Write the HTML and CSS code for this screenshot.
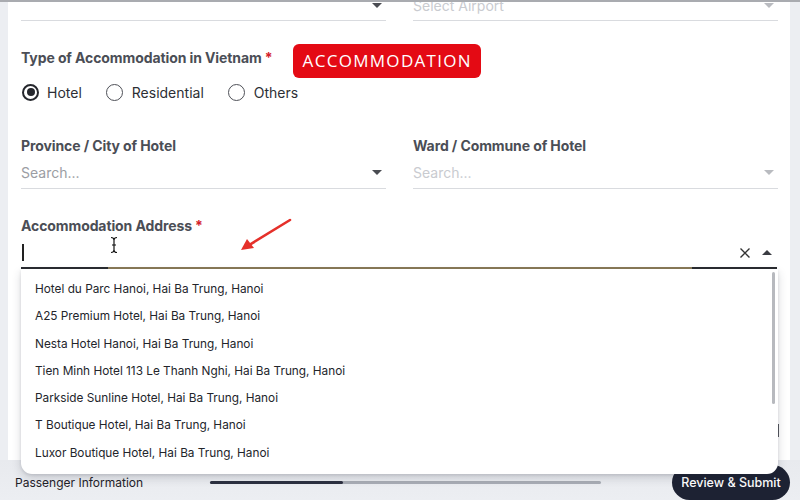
FILE: index.html
```html
<!DOCTYPE html>
<html>
<head>
<meta charset="utf-8">
<link rel="stylesheet" href="styles.css">
</head>
<body>
<div class="topline"></div>
<main class="card">
  <div class="row row-top">
    <div class="field field-top">
      <span class="placeholder"></span>
      <span class="caret-down"></span>
    </div>
    <div class="field field-top">
      <span class="placeholder faded">Select Airport</span>
      <span class="caret-down faded-caret"></span>
    </div>
  </div>

  <section class="accom">
    <div class="label-row">
      <span class="label">Type of Accommodation in Vietnam <span class="req">*</span></span>
      <span class="badge">ACCOMMODATION</span>
    </div>
    <div class="radios">
      <label class="radio"><span class="dot checked"></span>Hotel</label>
      <label class="radio"><span class="dot"></span>Residential</label>
      <label class="radio"><span class="dot"></span>Others</label>
    </div>
  </section>

  <div class="row row-loc">
    <div class="col">
      <div class="label">Province / City of Hotel</div>
      <div class="field">
        <span class="placeholder">Search...</span>
        <span class="caret-down"></span>
      </div>
    </div>
    <div class="col">
      <div class="label">Ward / Commune of Hotel</div>
      <div class="field">
        <span class="placeholder faded">Search...</span>
        <span class="caret-down faded-caret"></span>
      </div>
    </div>
  </div>

  <section class="address">
    <div class="label">Accommodation Address <span class="req">*</span></div>
    <div class="field field-focus">
      <span class="text-caret"></span>
      <span class="icons">
        <svg class="x-icon" width="12" height="12" viewBox="0 0 12 12"><path d="M1.5 1.5 L10.5 10.5 M10.5 1.5 L1.5 10.5" stroke="#333" stroke-width="1.4" fill="none"/></svg>
        <span class="caret-up"></span>
      </span>
    </div>
    <svg class="ibeam" width="10" height="18" viewBox="0 0 10 18"><path d="M2 1.5 Q5 1.5 5 4 Q5 1.5 8 1.5 M5 4 V14 M2 16.5 Q5 16.5 5 14 Q5 16.5 8 16.5 M3 9 H7" stroke="#111" stroke-width="1.2" fill="none"/></svg>
    <svg class="red-arrow" width="56" height="36" viewBox="0 0 56 36"><path d="M52 3 L8 30" stroke="#e5302a" stroke-width="2.6" stroke-linecap="round"/><path d="M3 33 L9 22 L16 31 Z" fill="#e5302a"/></svg>

    <ul class="menu">
      <li>Hotel du Parc Hanoi, Hai Ba Trung, Hanoi</li>
      <li>A25 Premium Hotel, Hai Ba Trung, Hanoi</li>
      <li>Nesta Hotel Hanoi, Hai Ba Trung, Hanoi</li>
      <li>Tien Minh Hotel 113 Le Thanh Nghi, Hai Ba Trung, Hanoi</li>
      <li>Parkside Sunline Hotel, Hai Ba Trung, Hanoi</li>
      <li>T Boutique Hotel, Hai Ba Trung, Hanoi</li>
      <li>Luxor Boutique Hotel, Hai Ba Trung, Hanoi</li>
      <span class="scroll-thumb"></span>
    </ul>
  </section>
  <span class="behind-tick"></span>
</main>
<footer class="footer">
  <span class="step">Passenger Information</span>
  <div class="progress"><span class="progress-fill"></span></div>
  <button class="submit">Review &amp; Submit</button>
</footer>
</body>
</html>
```
FILE: styles.css
```css
* { box-sizing: border-box; }
html, body { margin: 0; padding: 0; }
body {
  width: 800px;
  height: 500px;
  overflow: hidden;
  background: #eceef2;
  font-family: Inter, "Liberation Sans", sans-serif;
  display: flex;
  flex-direction: column;
  position: relative;
}
.topline {
  position: absolute;
  top: 0; left: 0; right: 0;
  height: 2px;
  background: #a9abb0;
  z-index: 5;
}
.card {
  background: #fff;
  margin: 0 10px 0 8px;
  padding: 0 13px 0 13px;
  height: 462px;
  position: relative;
}
.row {
  display: grid;
  grid-template-columns: 365px 365px;
  column-gap: 27px;
}
.field {
  display: flex;
  align-items: center;
  justify-content: space-between;
  border-bottom: 1px solid #d9dbdf;
  height: 32px;
  position: relative;
}
.field-top {
  height: 21px;
  align-items: flex-start;
}
.field-top .placeholder { margin-top: -3px; }
.field-top .caret-down { margin-top: 3px; }
.placeholder {
  font-size: 14px;
  color: #9b9da3;
  line-height: 18px;
}
.placeholder.faded { color: #c9cbd0; }
.caret-down {
  width: 0; height: 0;
  border-left: 5px solid transparent;
  border-right: 5px solid transparent;
  border-top: 5px solid #4a4c52;
  margin-right: 4px;
}
.caret-down.faded-caret { border-top-color: #b9bbc0; }
.caret-up {
  width: 0; height: 0;
  border-left: 5px solid transparent;
  border-right: 5px solid transparent;
  border-bottom: 5px solid #3a3c42;
  margin-right: 5px;
}
.label {
  font-weight: 700;
  font-size: 14px;
  color: #4b4e56;
  line-height: 18px;
  letter-spacing: -0.1px;
}
.req { color: #d3202a; }
.accom { margin-top: 23px; }
.label-row {
  display: flex;
  align-items: flex-start;
  gap: 20px;
}
.label-row .label { margin-top: 5px; }
.badge {
  background: #e40a14;
  color: #fff;
  font-family: "Open Sans", "Liberation Sans", sans-serif;
  font-size: 17px;
  font-weight: 500;
  letter-spacing: 1.3px;
  border-radius: 6px;
  height: 34px;
  line-height: 34px;
  padding: 0 9px 0 10px;
}
.radios {
  display: flex;
  align-items: center;
  margin-top: 2px;
  height: 24px;
}
.radio {
  display: flex;
  align-items: center;
  font-size: 14px;
  color: #2d2f35;
  margin-right: 24px;
}
.dot {
  width: 17px; height: 17px;
  border-radius: 50%;
  border: 1.6px solid #4e5057;
  margin: 0 9px 0 0;
  position: relative;
  display: inline-block;
}
.dot.checked { border: 2px solid #25272d; }
.dot.checked::after {
  content: "";
  position: absolute;
  left: 2.5px; top: 2.5px;
  width: 8px; height: 8px;
  border-radius: 50%;
  background: #25272d;
}
.radio:first-child .dot { margin-left: 1px; margin-right: 8px; }
.row-loc { margin-top: 33px; }
.col .field { margin-top: 2px; }
.address { margin-top: 28px; position: relative; }
.field-focus {
  border-bottom: none;
  height: 33px;
  margin-top: 1px;
  background:
    linear-gradient(to right, #2a2c31 0, #2a2c31 87px, #8a7b58 87px, #8a7b58 671px, #2a2c31 671px) bottom / 100% 2px no-repeat;
}
.text-caret {
  width: 1.6px;
  height: 17px;
  background: #222;
  margin-left: 1px;
  margin-top: 0;
}
.icons {
  display: flex;
  align-items: center;
  gap: 11px;
  margin-top: 0;
}
.ibeam {
  position: absolute;
  left: 88px;
  top: 19px;
}
.red-arrow {
  position: absolute;
  left: 217px;
  top: 0;
}
.menu {
  position: absolute;
  left: 0;
  top: 52px;
  width: 757px;
  height: 205px;
  margin: 0;
  padding: 7px 0 0 0;
  list-style: none;
  background: #fff;
  border-radius: 0 0 11px 11px;
  box-shadow: 0 4px 10px rgba(40, 45, 60, 0.18), 0 1px 3px rgba(40, 45, 60, 0.12);
  z-index: 10;
}
.menu li {
  font-size: 11.8px;
  color: #23252b;
  height: 27.3px;
  line-height: 27.3px;
  padding-left: 14px;
}
.scroll-thumb {
  position: absolute;
  right: 3px;
  top: 3px;
  width: 3px;
  height: 132px;
  border-radius: 2px;
  background: #b7b9be;
}
.behind-tick {
  position: absolute;
  right: 11px;
  top: 424px;
  width: 2px;
  height: 13px;
  background: #55575d;
}
.footer {
  flex: 1;
  display: flex;
  align-items: center;
  padding: 4px 10px 0 15px;
  background: linear-gradient(#e8eaee, #eceef2);
  position: relative;
}
.step {
  font-size: 12px;
  color: #1f2128;
  width: 195px;
}
.progress {
  width: 391px;
  height: 3px;
  background: #a9adb5;
  border-radius: 2px;
}
.progress-fill {
  display: block;
  width: 133px;
  height: 3px;
  background: #2c3040;
  border-radius: 2px;
}
.submit {
  margin-left: auto;
  margin-top: 1px;
  height: 35px;
  width: 118px;
  border: none;
  border-radius: 18px;
  background: #1d2233;
  color: #fff;
  font-family: Inter, "Liberation Sans", sans-serif;
  font-size: 12.5px;
  font-weight: 500;
  padding: 0;
}
```
